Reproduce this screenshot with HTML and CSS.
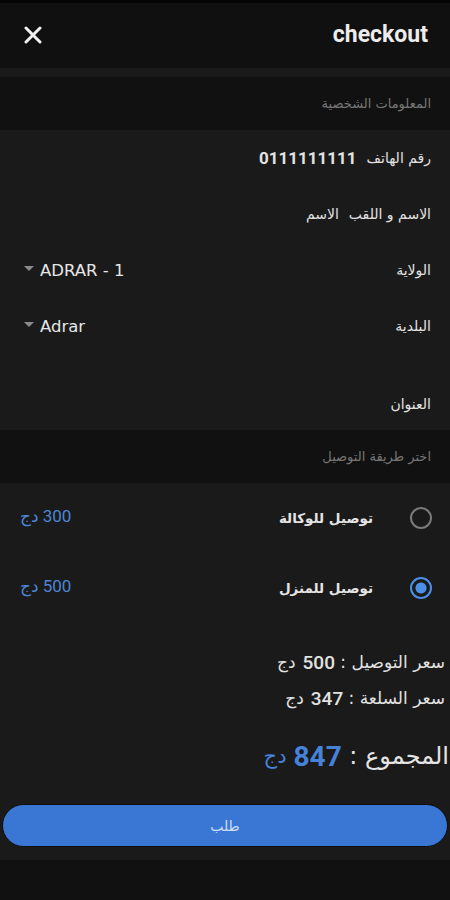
FILE: index.html
```html
<!DOCTYPE html>
<html lang="ar" dir="rtl">
<head>
    <meta charset="UTF-8">
    <meta name="viewport" content="width=device-width, initial-scale=1.0">
    <title>checkout</title>
    <link rel="stylesheet" href="styles.css">
</head>
<body>
    <header class="topbar">
        <h1 class="title">checkout</h1>
        <button class="close" aria-label="close">
            <svg width="18" height="18" viewBox="0 0 18 18">
                <path d="M2 2 L16 16 M16 2 L2 16" stroke="#f2f2f2" stroke-width="3" stroke-linecap="round"/>
            </svg>
        </button>
    </header>
    <div class="strip"></div>

    <div class="section-title">المعلومات الشخصية</div>
    <div class="card">
        <div class="row">
            <span class="label">رقم الهاتف</span>
            <span class="value">0111111111</span>
        </div>
        <div class="row">
            <span class="label">الاسم و اللقب</span>
            <span class="label">الاسم</span>
        </div>
        <div class="row spread">
            <span class="label">الولاية</span>
            <span class="select"><span class="caret"></span>ADRAR - 1</span>
        </div>
        <div class="row spread">
            <span class="label">البلدية</span>
            <span class="select"><span class="caret"></span>Adrar</span>
        </div>
        <div class="row address">
            <span class="label">العنوان</span>
        </div>
    </div>

    <div class="section-title">اختر طريقة التوصيل</div>
    <div class="card options">
        <div class="option">
            <span class="radio"></span>
            <span class="option-label">توصيل للوكالة</span>
            <span class="price">300 دج</span>
        </div>
        <div class="option">
            <span class="radio checked"></span>
            <span class="option-label">توصيل للمنزل</span>
            <span class="price">500 دج</span>
        </div>

        <div class="summary">
            <div class="line">سعر التوصيل :&nbsp; <b>500</b> دج</div>
            <div class="line">سعر السلعة :&nbsp; <b>347</b> دج</div>
            <div class="total">المجموع :&nbsp; <span class="total-value"><b>847</b> دج</span></div>
        </div>

        <button class="order">طلب</button>
    </div>
    <div class="bottom"></div>
</body>
</html>
```

FILE: styles.css
```css
* {
    margin: 0;
    padding: 0;
    box-sizing: border-box;
}

body {
    width: 450px;
    min-height: 900px;
    background: #111111;
    color: #e2e2e2;
    font-family: Roboto, "DejaVu Sans", sans-serif;
}

.topbar {
    height: 68px;
    display: flex;
    align-items: center;
    justify-content: space-between;
    padding: 0 22px 0 23px;
    background: #101010;
    border-top: 3px solid #050505;
}

.title {
    font-size: 23px;
    font-weight: 700;
    color: #ececec;
    direction: ltr;
    padding-bottom: 2px;
}

.close {
    background: none;
    border: none;
    width: 20px;
    height: 20px;
    display: flex;
    align-items: center;
    justify-content: center;
    margin-top: -1px;
}

.strip {
    height: 9px;
    background: #1a1a1a;
}

.section-title {
    height: 53px;
    display: flex;
    align-items: center;
    padding: 0 19px;
    background: #111111;
    color: #767676;
    font-size: 13px;
    font-family: "DejaVu Sans", sans-serif;
}

.card {
    background: #1a1a1a;
}

.row {
    height: 56px;
    display: flex;
    align-items: center;
    gap: 10px;
    padding: 0 19px 0 24px;
    font-size: 14px;
    font-family: "DejaVu Sans", sans-serif;
}

.row .value {
    font-family: Roboto, "DejaVu Sans", sans-serif;
    font-size: 17px;
    font-weight: 700;
}

.row.spread {
    justify-content: space-between;
}

.row.address {
    height: 76px;
    align-items: flex-end;
    padding-bottom: 18px;
}

.select {
    direction: ltr;
    display: flex;
    align-items: center;
    gap: 6px;
    font-size: 16.5px;
    font-weight: 500;
    color: #e6e6e6;
}

.caret {
    width: 0;
    height: 0;
    border-left: 5px solid transparent;
    border-right: 5px solid transparent;
    border-top: 5px solid #8a8a8a;
    margin-top: -3px;
}

.options {
    padding-bottom: 13px;
}

.option {
    height: 70px;
    display: flex;
    align-items: center;
    padding: 0 18px 0 20px;
}

.radio {
    width: 22px;
    height: 22px;
    border-radius: 50%;
    border: 2px solid #7a7a7a;
    flex-shrink: 0;
}

.radio.checked {
    border-color: #4c8fe6;
    background: radial-gradient(circle, #4c8fe6 0 5px, #1a1a1a 6px);
}

.option-label {
    margin-right: 37px;
    font-size: 13.5px;
    font-weight: 700;
    font-family: "DejaVu Sans", sans-serif;
    color: #e4e4e4;
}

.price {
    margin-right: auto;
    margin-top: -4px;
    color: #4d86d4;
    font-size: 17px;
}

.summary {
    padding: 21px 5px 0 0;
    font-family: "DejaVu Sans", sans-serif;
}

.line {
    height: 36px;
    display: flex;
    align-items: center;
    font-size: 17px;
    color: #e2e2e2;
}

.line b {
    font-family: Roboto, sans-serif;
    font-size: 19px;
    font-weight: 500;
    margin-left: 7px;
}

.total {
    margin-right: -4px;
    margin-top: 22px;
    height: 36px;
    display: flex;
    align-items: center;
    font-size: 24px;
    color: #e4e4e4;
}

.total-value {
    color: #4582d8;
    font-size: 21px;
    display: flex;
    align-items: center;
    gap: 7px;
}

.total-value b {
    font-family: Roboto, sans-serif;
    font-size: 28px;
    font-weight: 700;
}

.order {
    display: block;
    width: 446px;
    height: 43px;
    margin: 30px 2px 0;
    border: 1px solid #0c0c0c;
    border-radius: 22px;
    background: #3a77d5;
    color: #cfdcf2;
    font-size: 14px;
    font-family: "DejaVu Sans", sans-serif;
}

.bottom {
    height: 40px;
    background: #111111;
}
```
